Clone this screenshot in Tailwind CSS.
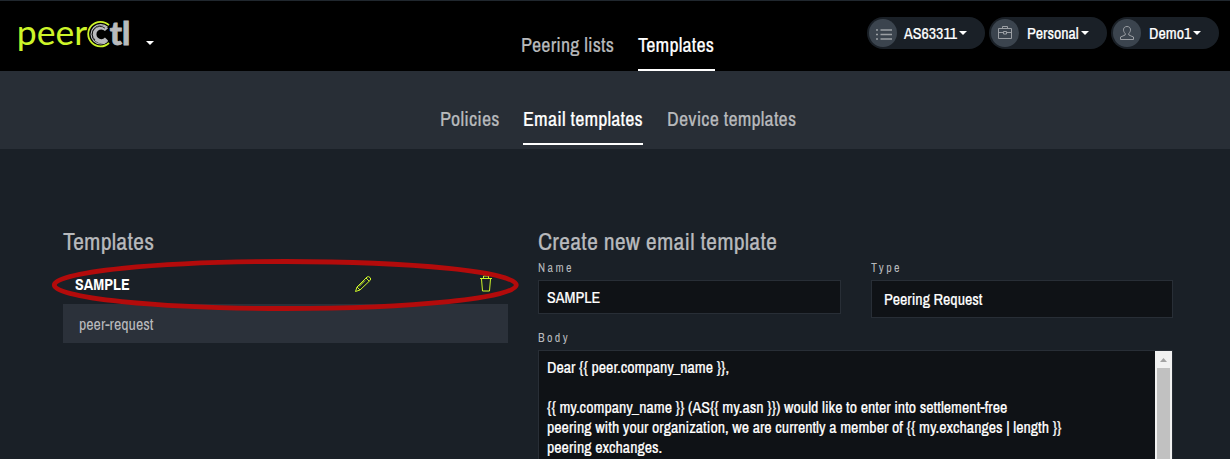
<!DOCTYPE html>
<html lang="en">
<head>
<meta charset="utf-8">
<title>peerCtl</title>
<script src="https://cdn.jsdelivr.net/npm/@tailwindcss/browser@4"></script>
</head>
<body class="bg-[#1a2027] h-[459px] overflow-hidden font-['Archivo_Narrow','Liberation_Sans_Narrow','Liberation_Sans',sans-serif] text-base leading-5 text-[#b7b9bc] relative">
<header class="h-[71px] bg-black border-t border-[#20272e] flex">
  <div class="w-[521px] pl-[10px] flex">
    <svg class="w-[129px] h-[64px] overflow-visible" viewBox="10 1 129 64" fill="none">
      <text x="16.800" y="45.300" font-family="Lato" font-size="35" fill="#cdf529" textLength="70.500" lengthAdjust="spacingAndGlyphs">peer</text>
      <path d="M109 25.200A12.300 12.300 0 1 0 109 43" stroke="#cdf529" stroke-width="1.800"/>
      <path d="M107.500 27.300A9.700 9.700 0 1 0 107.500 41.300" stroke="#b9babd" stroke-width="1.200"/>
      <path d="M106.500 29.600A7 7 0 1 0 106.500 39" stroke="#b9babd" stroke-width="4.200"/>
      <path d="M105 28.200A7.500 7.500 0 0 0 95 40" stroke="#000" stroke-width=".8"/>
      <text x="109.800" y="45" font-family="Lato" font-weight="900" font-size="32.500" fill="#b9babd" stroke="#b9babd" stroke-width=".8" textLength="20.500" lengthAdjust="spacingAndGlyphs">tl</text>
    </svg>
    <svg class="w-[8px] h-[4px] mt-[40px] ml-[7px]" viewBox="0 0 8 4" fill="#fff"><path d="M0 0h8L4 4z"/></svg>
  </div>
  <nav class="w-[346px] flex gap-6 text-xl leading-6 pt-[32px] [-webkit-text-stroke:0.2px_currentColor]">
    <a class="w-[93px] whitespace-nowrap tracking-[0.15px]">Peering lists</a>
    <a class="w-[77px] h-[38px] whitespace-nowrap text-white border-b-2 border-white tracking-[0.15px]">Templates</a>
  </nav>
  <div class="flex gap-[4px] pt-[16px] text-white [-webkit-text-stroke:0.2px_white]">
    <div class="w-[118px] h-8 rounded-full bg-[#1a2027] flex items-center pl-[2px]">
      <span class="size-7 rounded-full bg-[#3b444e] grid place-items-center"><svg class="size-4 mt-[2px] ml-[2px]" viewBox="0 0 16 16" stroke="#9b9fa4" stroke-width="1.500"><path d="M0 4h2M0 8.500h2M0 13h2M4.500 4H16M4.500 8.500H16M4.500 13H16"/></svg></span>
      <span class="w-[55px] ml-[7px] whitespace-nowrap">AS63311</span>
      <svg class="w-2 h-1" viewBox="0 0 8 4" fill="#fff"><path d="M0 0h8L4 4z"/></svg>
    </div>
    <div class="w-[118px] h-8 rounded-full bg-[#1a2027] flex items-center pl-[2px]">
      <span class="size-7 rounded-full bg-[#3b444e] grid place-items-center"><svg class="size-4" viewBox="0 0 16 16" fill="none" stroke="#9b9fa4"><path d="M1.500 3.500h13v10h-13zM1.500 7.500h5M9.500 7.500h5M5.500 3.500v-2h5v2M6.500 6.500h3v2.500h-3z"/></svg></span>
      <span class="w-[54px] ml-[8px] whitespace-nowrap">Personal</span>
      <svg class="w-2 h-1" viewBox="0 0 8 4" fill="#fff"><path d="M0 0h8L4 4z"/></svg>
    </div>
    <div class="w-[108px] h-8 rounded-full bg-[#1a2027] flex items-center pl-[2px]">
      <span class="size-7 rounded-full bg-[#3b444e] grid place-items-center"><svg class="size-4" viewBox="0 0 16 16" fill="none" stroke="#9b9fa4"><path d="M6.200 8.500C3.500 6 4 1.500 8 1.500s4.500 4.500 1.800 7v1.500l4.700 2v2.500h-13V12l4.700-2z"/></svg></span>
      <span class="w-[44px] ml-[8px] whitespace-nowrap">Demo1</span>
      <svg class="w-2 h-1" viewBox="0 0 8 4" fill="#fff"><path d="M0 0h8L4 4z"/></svg>
    </div>
  </div>
</header>
<nav class="h-[78px] bg-[#282e36] flex gap-6 text-xl leading-6 pl-[440px] pt-[36px] tracking-[0.16px] [-webkit-text-stroke:0.2px_currentColor]">
  <a class="w-[59px] whitespace-nowrap">Policies</a>
  <a class="w-[120px] h-[38px] whitespace-nowrap text-white border-b-2 border-white">Email templates</a>
  <a class="whitespace-nowrap">Device templates</a>
</nav>
<main class="flex pl-[63px] pt-[77px]">
  <section class="w-[445px] mr-[30px]">
    <h2 class="text-2xl leading-[30px] tracking-[0.17px] [-webkit-text-stroke:0.2px_currentColor]">Templates</h2>
    <div class="h-[48px] flex items-center pl-3 pt-[2px]">
      <b class="w-[280px] text-white pt-[6px]">SAMPLE</b>
      <svg class="size-4 mt-[6px]" viewBox="0 0 16 16" fill="none" stroke="#cdf529"><path d="M.5 15.500L2 11 12 1q1.500-1 3 .5t0 3L5 14zM2 11l3 3M11 2l3 3M10 4.500L4 10.500"/></svg>
      <svg class="w-[14px] h-[17px] ml-[108px] mt-[5px]" viewBox="0 0 14 17" fill="none" stroke="#cdf529"><path d="M1 3.500h12M4.500 3V1h5v2M2.500 4l1 12h7l1-12"/></svg>
    </div>
    <div class="h-[39px] bg-[#2b313a] pl-4 leading-[41px]">peer-request</div>
  </section>
  <section class="w-[635px]">
    <h2 class="text-2xl leading-[30px] whitespace-nowrap tracking-[0.16px] [-webkit-text-stroke:0.2px_currentColor]">Create new email template</h2>
    <div class="flex gap-[30px] h-[73px]">
      <div class="w-[303px]">
        <div class="text-xs leading-[24px] tracking-[2.4px]">Name</div>
        <div class="h-[34px] bg-[#0f1216] border border-[#282e36] text-white pl-2 leading-[33px] [-webkit-text-stroke:0.2px_white]">SAMPLE</div>
      </div>
      <div class="w-[302px]">
        <div class="text-xs leading-[24px] tracking-[2.4px]">Type</div>
        <div class="h-[38px] bg-[#0f1216] border border-[#282e36] text-white pl-3 leading-[37px] [-webkit-text-stroke:0.2px_white]">Peering Request</div>
      </div>
    </div>
    <div class="text-xs leading-[18px] h-[21px] tracking-[2.4px]">Body</div>
    <div class="h-[120px] bg-[#0f1216] border border-[#282e36] text-white flex justify-between">
      <div class="pl-2 pt-[6px] whitespace-pre [-webkit-text-stroke:0.2px_white]">Dear {{ peer.company_name }},

{{ my.company_name }} (AS{{ my.asn }}) would like to enter into settlement-free
peering with your organization, we are currently a member of {{ my.exchanges | length }}
peering exchanges.</div>
      <div class="w-[17px] bg-[#f1f1f1] px-[2px]"><svg class="block w-[13px] h-[17px]" viewBox="0 0 13 17" fill="#a3a3a3"><path d="M3 11h7L6.500 7z"/></svg><div class="h-[110px] bg-[#c1c1c1]"></div></div>
    </div>
  </section>
</main>
<svg class="absolute left-[50px] top-[257px] w-[472px] h-[56px]" viewBox="50 257 472 56" fill="none"><ellipse cx="285.300" cy="285" rx="231" ry="23.500" stroke="#b30b0b" stroke-width="4.800"/></svg>
</body>
</html>
